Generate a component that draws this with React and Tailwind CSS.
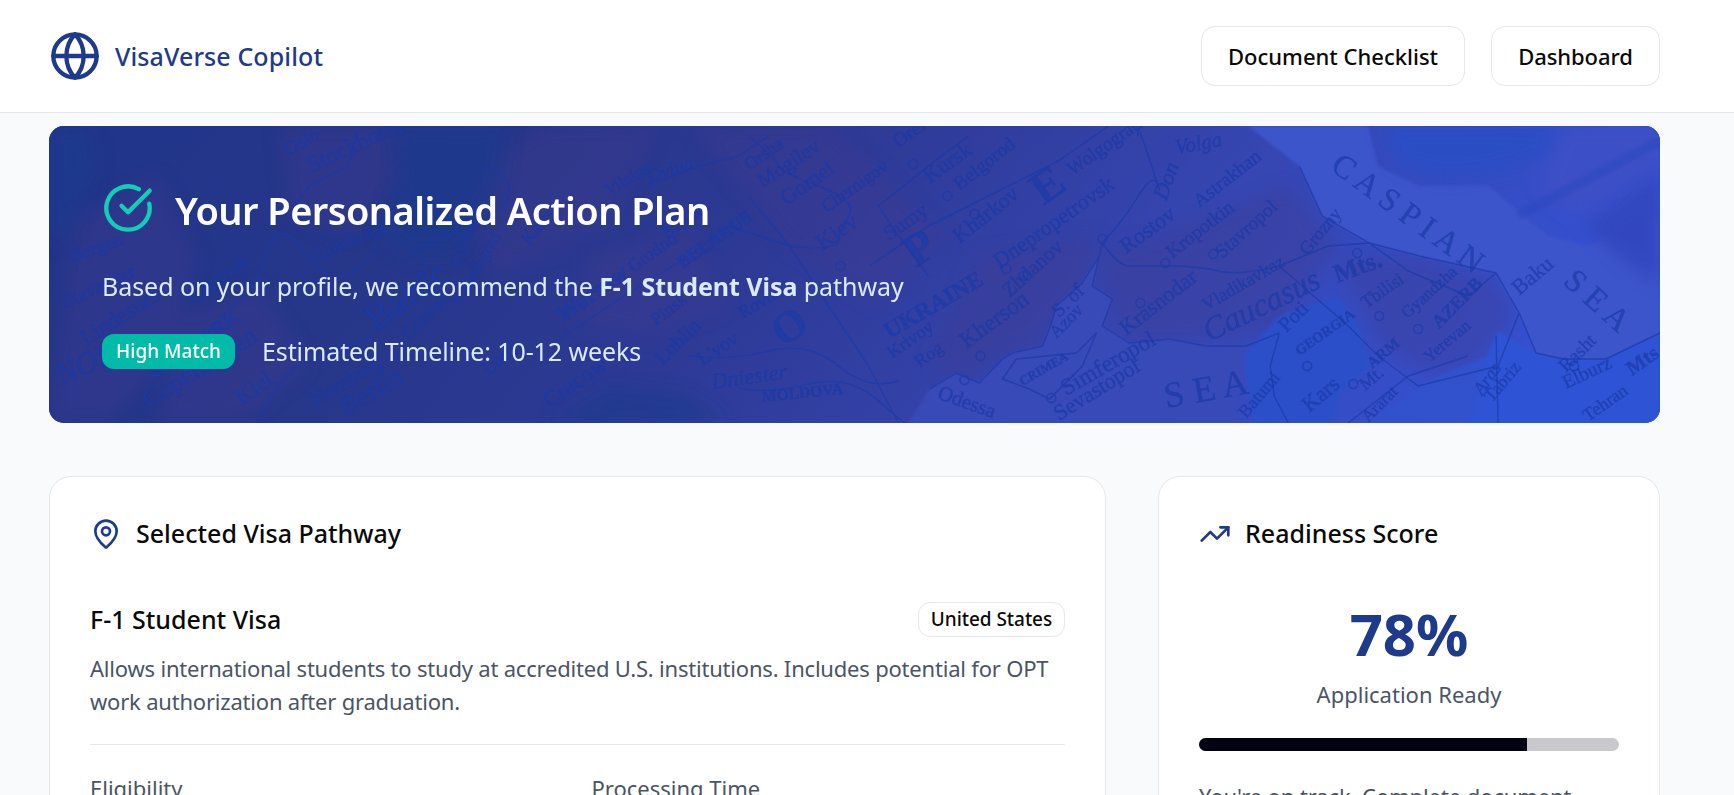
import React from 'react';
import { Globe, CircleCheckBig, MapPin, TrendingUp } from 'lucide-react';

// place names printed on the old map behind the hero: [text, x, y, rotation, size, style]
const mapLabels = [
  ['Bergen', 23, 137, -20, 15], ['Stavanger', 17, 183, -25, 15], ['Lindesnes', 37, 220, -32, 17],
  ['NOR', 13, 260, -25, 24, 'i'], ['DENMARK', 107, 253, -35, 15, 'b'], ['Copenhagen', 100, 283, -32, 20],
  ['Skagerrak', 140, 180, -35, 14], ['Kiel', 193, 280, -35, 18], ['Hamburg', 267, 280, -30, 16],
  ['Berlin', 297, 290, -30, 21], ['Göteborg', 267, 138, -25, 16], ['Stockholm', 263, 47, -25, 18],
  ['Oslo', 240, 30, -30, 15], ['Baltic', 327, 207, -35, 30], ['Gdynia', 411, 143, -70, 13],
  ['Gdansk', 360, 215, -45, 15], ['Kaliningrad', 412, 180, -60, 13], ['Kaunas', 480, 120, -50, 14],
  ['Vilnius', 560, 70, -30, 13], ['Warsaw', 514, 197, -35, 18, 'b'], ['Cracow', 501, 283, -35, 18],
  ['Lublin', 614, 240, -45, 16], ['Lodz', 440, 250, -40, 15], ['Dvina', 601, 57, -18, 15, 'i'],
  ['Minsk', 618, 113, -35, 16], ['BELARUS', 634, 143, -35, 14, 'b'], ['Grodno', 584, 147, -35, 14],
  ['Pinsk', 608, 200, -38, 14], ['Rovno', 694, 193, -30, 14], ['O', 735, 222, -35, 44, 'b'],
  ["L'vov", 654, 240, -33, 15], ['Dniester', 664, 263, -8, 17, 'i'], ['MOLDOVA', 714, 276, -6, 12, 'b'],
  ['Orsha', 701, 45, -35, 14], ['Mogilev', 714, 62, -33, 16], ['Gomel', 738, 80, -35, 17],
  ['Chernigov', 778, 87, -35, 14], ['Kiev', 774, 125, -35, 18], ['Sumy', 841, 115, -35, 16],
  ['Orel', 850, 22, -35, 15], ['Kursk', 881, 58, -35, 17], ['Belgorod', 911, 65, -38, 15],
  ['Kharkov', 911, 118, -38, 17], ['Dnepropetrovsk', 951, 143, -35, 17], ['Zhdanov', 961, 172, -42, 16],
  ['Kherson', 918, 223, -36, 18], ['UKRAINE', 841, 213, -30, 18, 'b'], ['Krivoy', 844, 233, -35, 14],
  ['Rog', 871, 242, -35, 14], ['Rostov', 1078, 128, -36, 17], ['Don', 1118, 75, -70, 17, 'i'],
  ['Volga', 1128, 28, -10, 16, 'i'], ['Astrakhan', 1151, 82, -38, 15], ['Kropotkin', 1124, 133, -38, 15],
  ['Stavropol', 1174, 133, -42, 15], ['Krasnodar', 1078, 210, -38, 17], ['Vladikavkaz', 1158, 185, -30, 14],
  ['Caucasus', 1161, 216, -26, 25, 'i'], ['Simferopol', 1018, 270, -30, 18], ['Sevastopol', 1011, 295, -32, 17],
  ['S E A', 1118, 282, -10, 28], ['S. of', 1011, 192, -45, 15], ['Azov', 1008, 213, -45, 14],
  ['Odessa', 888, 272, 20, 16], ['CRIMEA', 974, 260, -30, 10, 'b'], ['P', 868, 142, -35, 46, 'b'],
  ['E', 995, 80, -35, 46, 'b'], ['Wolgograd', 1024, 50, -35, 15], ['Batumi', 1198, 293, -50, 14],
  ['C A S P I A N', 1281, 43, 36, 25], ['S E A', 1514, 157, 42, 25], ['Grozny', 1259, 130, -50, 14],
  ['Mts.', 1289, 157, -20, 20, 'b'], ['Tbilisi', 1318, 183, -35, 14], ['Gyandzha', 1359, 193, -42, 13],
  ['AZERB', 1391, 203, -45, 14, 'b'], ['GEORGIA', 1251, 230, -35, 11, 'b'], ['Poti', 1238, 207, -45, 16],
  ['ARM', 1324, 243, -40, 12, 'b'], ['Yerevan', 1381, 237, -40, 13], ['Kars', 1261, 287, -40, 17],
  ['Baku', 1471, 170, -40, 17], ['Rasht', 1518, 247, -45, 15], ['Elburz', 1518, 263, -25, 15],
  ['Tabriz', 1444, 277, -50, 14], ['Mts', 1584, 250, -35, 16, 'b'], ['Aras', 1434, 270, -55, 14, 'i'],
  ['Ararat', 1320, 297, -45, 13], ['Mt.', 1317, 265, -40, 14], ['Tehran', 1540, 296, -35, 14],
];

const mapLines = [
  // coast of the Black Sea and the Azov
  'M881 263 L908 247 L931 257 L954 233 L964 227 L994 220 L1001 203 L1008 180 L1034 157 L1051 130 L1054 117',
  'M1051 130 L1044 160 L1064 173 L1054 200 L1081 217 L1121 213 L1158 220 L1198 220 L1231 207',
  'M954 253 L968 233 L1028 227 L1048 207 L1034 240 L1001 273 L981 263 Z',
  'M1231 207 L1222 240 L1226 270 L1240 297',
  // Caspian shore
  'M1251 40 L1274 90 L1321 117 L1371 130 L1448 147 L1471 187 L1488 227 L1515 233 L1558 233 L1612 207',
  // rivers and borders
  'M1054 117 Q1075 95 1090 70 T1110 60 T1100 30 T1090 10',
  'M1054 117 Q1070 140 1080 140 T1120 140 T1170 145 T1231 140',
  'M821 140 L880 100 L960 60 L1010 35 L1060 0',
  'M880 150 L850 110 L830 80 L880 40 L920 10',
  'M741 120 Q790 125 790 115 T800 90 T770 60 T730 40 T700 10',
  'M700 70 L741 120 L780 180 L820 240 L850 297',
  'M500 220 L560 180 L640 130 L680 100 L741 120',
  'M600 60 L650 40 L690 30 L720 10',
  'M640 230 Q680 235 720 225 T790 240 T850 255',
  'M690 262 Q720 268 760 258 T830 275 T860 297',
  'M330 120 Q310 150 290 150 T250 120 T215 135 T200 170 T165 200 T150 250',
  'M210 297 Q230 250 250 240 T300 220 T360 170 T370 130 T420 100 T440 40',
  'M310 0 L300 40 L260 60 L240 90',
  'M1231 140 L1280 120 L1321 117 L1360 145 L1420 170 L1448 147',
  'M1231 140 L1300 200 L1330 230 L1370 260 L1450 240 L1471 187',
  'M1300 297 L1360 250 L1420 230',
  'M1448 210 L1450 297',
];

const mapCircles = [[1054, 113], [1117, 137], [1165, 128], [926, 88], [899, 70], [865, 38], [932, 230], [916, 254], [1092, 177], [975, 150], [958, 143], [1309, 127], [1331, 190], [1305, 258], [1370, 203], [1259, 240], [1526, 240], [737, 160], [792, 140], [1003, 272]];

function MapBackground() {
  return (
    <svg className="absolute inset-0 h-full w-full" viewBox="0 0 1612 297" preserveAspectRatio="none" aria-hidden="true">
      <defs>
        <linearGradient id="heroBase" x1="0" y1="0" x2="1" y2="0.15">
          <stop offset="0" stopColor="#20358a" />
          <stop offset="0.3" stopColor="#27378a" />
          <stop offset="0.5" stopColor="#2e3a96" />
          <stop offset="0.75" stopColor="#3646b2" />
          <stop offset="1" stopColor="#3550cf" />
        </linearGradient>
        <filter id="soft" x="-10%" y="-10%" width="120%" height="120%">
          <feGaussianBlur stdDeviation="9" />
        </filter>
        <filter id="edge" x="-5%" y="-5%" width="110%" height="110%">
          <feGaussianBlur stdDeviation="1.6" />
        </filter>
        <filter id="ink" x="-5%" y="-5%" width="110%" height="110%">
          <feGaussianBlur stdDeviation="0.5" />
        </filter>
      </defs>
      <rect width="1612" height="297" fill="url(#heroBase)" />

      {/* land tint */}
      <g fill="#3f3b8e" opacity="0.38" filter="url(#soft)">
        <path d="M20 90 L110 50 L150 130 L120 230 L60 297 L0 297 L10 180 Z" />
        <path d="M230 0 L345 0 L350 60 L300 110 L240 90 Z" />
        <path d="M130 190 L210 160 L260 240 L190 297 L110 297 Z" />
        <path d="M440 30 L500 0 L610 0 L560 100 L450 150 L420 110 Z" />
        <path d="M540 130 L640 100 L680 180 L600 210 L530 200 Z" />
        <path d="M640 0 L780 0 L900 110 L830 180 L740 120 Z" />
        <path d="M930 130 L1050 110 L1040 160 L990 215 L920 250 L880 240 Z" />
        <path d="M1054 130 L1140 100 L1240 60 L1290 120 L1230 205 L1160 215 L1080 215 L1060 175 Z" />
        <path d="M1290 130 L1370 130 L1448 150 L1470 190 L1430 240 L1380 250 L1330 220 Z" />
      </g>

      {/* dark water at the left */}
      <g fill="#1d3a8e" opacity="0.7" filter="url(#soft)">
        <path d="M345 0 L460 0 L450 60 L410 130 L360 130 L330 110 L350 50 Z" />
        <path d="M500 297 L560 260 L640 270 L680 297 Z" />
        <path d="M0 0 L40 0 L50 40 L20 110 L0 120 Z" />
      </g>

      {/* seas and lowlands on the right */}
      <g filter="url(#edge)">
        <path d="M881 263 L908 247 L931 257 L954 233 L964 227 L994 220 L1001 203 L1008 180 L1034 157 L1051 130 L1044 160 L1064 173 L1054 200 L1081 217 L1121 213 L1158 220 L1198 220 L1190 297 L860 297 Z" fill="#394ab8" />
        <path d="M1251 40 L1274 90 L1321 117 L1371 130 L1448 147 L1471 187 L1488 227 L1515 233 L1558 233 L1612 207 L1612 90 L1540 120 L1500 110 L1440 60 L1371 60 L1330 40 L1320 0 L1200 0 Z" fill="#3d54cb" />
        <path d="M1231 190 L1290 170 L1310 200 L1322 240 L1290 270 L1285 297 L1205 297 L1195 230 Z" fill="#2b4fc8" />
        <path d="M1400 297 L1430 250 L1450 205 L1488 227 L1515 233 L1558 233 L1612 207 L1612 297 Z" fill="#2e53d4" />
        <path d="M1320 297 L1380 255 L1440 230 L1420 297 Z" fill="#3251cd" />
      </g>
      <g filter="url(#soft)">
        <path d="M1330 0 L1350 40 L1400 52 L1450 45 L1500 30 L1510 0 Z" fill="#294dc4" />
        <path d="M1535 100 L1612 45 L1612 160 L1570 130 Z" fill="#3346bf" />
        <path d="M1515 0 L1612 0 L1612 40 L1530 90 L1490 60 Z" fill="#3d50c6" />
      </g>
      <path d="M1470 90 L1612 15" stroke="#2a48c0" strokeWidth="9" opacity="0.55" filter="url(#edge)" />

      {/* lines, towns and names */}
      <g fill="none" stroke="#1b3aa8" strokeWidth="1.4" opacity="0.7" filter="url(#ink)">
        {mapLines.map((d, i) => (
          <path key={i} d={d} strokeLinejoin="round" />
        ))}
        {mapCircles.map(([cx, cy], i) => (
          <circle key={i} cx={cx} cy={cy} r="4.5" />
        ))}
      </g>
      <g fill="#1b3aa8" stroke="#1b3aa8" strokeWidth="0.3" opacity="0.72" filter="url(#ink)" fontFamily="'Liberation Serif', serif">
        {mapLabels.map(([text, x, y, rot, size, style], i) => (
          <text
            key={i}
            x={x}
            y={y}
            fontSize={size >= 40 ? size : size * 1.3}
            fontWeight={style === 'b' ? 700 : 400}
            fontStyle={style === 'i' ? 'italic' : 'normal'}
            transform={`rotate(${rot} ${x} ${y})`}
          >
            {text}
          </text>
        ))}
      </g>
    </svg>
  );
}

export default function App() {
  return (
    <div className="h-screen overflow-hidden bg-[#f9fafb] font-['Noto_Sans',sans-serif]">
      {/* Top bar */}
      <header className="flex h-[113px] items-center justify-between border-b border-[#e5e7eb] bg-white pl-[49px] pr-[74px]">
        <div className="flex items-center gap-[14px]">
          <Globe size={52} strokeWidth={2} className="text-[#1e3a8a]" />
          <span className="relative top-[1px] text-[25px] font-medium tracking-[0.1px] text-[#1e3a8a]">VisaVerse Copilot</span>
        </div>
        <div className="flex items-center gap-[26px]">
          <button className="h-[60px] w-[264px] rounded-[14px] border border-[#e5e7eb] bg-white text-[22px] font-medium text-[#0a0a0a]">
            Document Checklist
          </button>
          <button className="h-[60px] w-[169px] rounded-[14px] border border-[#e5e7eb] bg-white text-[22px] font-medium tracking-[-0.1px] text-[#0a0a0a]">
            Dashboard
          </button>
        </div>
      </header>

      <main className="pl-[49px] pr-[74px] pt-[13px]">
        {/* Hero */}
        <section className="relative h-[297px] overflow-hidden rounded-[15px] bg-[#1e3a8a]">
          <MapBackground />
          <div className="relative px-[53px] pt-[56px]">
            <div className="flex items-center gap-[21px]">
              <CircleCheckBig size={52} strokeWidth={2} className="text-[#14cdb8]" />
              <h1 className="relative top-[2px] text-[38px] font-semibold leading-[52px] tracking-[-0.55px] text-white">Your Personalized Action Plan</h1>
            </div>
            <p className="mt-[34px] text-[25px] leading-[36px] tracking-[-0.05px] text-[#dbeafe]">
              Based on your profile, we recommend the <strong className="font-bold">F-1 Student Visa</strong> pathway
            </p>
            <div className="mt-[29px] flex items-center gap-[27px]">
              <span className="flex h-[35px] w-[133px] items-center justify-center rounded-[12px] bg-[#00bba7] text-[19px] font-medium text-white">
                High Match
              </span>
              <span className="text-[25px] leading-[36px] tracking-[-0.1px] text-[#dbeafe]">Estimated Timeline: 10-12 weeks</span>
            </div>
          </div>
        </section>

        <div className="mt-[53px] flex gap-[52px]">
          {/* Selected pathway */}
          <section className="w-[1057px] shrink-0 rounded-[22px] border border-[#e5e7eb] bg-white px-[40px] pt-[41px]">
            <div className="flex h-[32px] items-center gap-[14px]">
              <MapPin size={32} strokeWidth={2} className="text-[#1e3a8a]" />
              <h2 className="text-[25px] font-medium text-[#0a0a0a]">Selected Visa Pathway</h2>
            </div>
            <div className="mt-[52px] flex h-[35px] items-center justify-between">
              <h3 className="text-[25px] font-medium text-[#0a0a0a]">F-1 Student Visa</h3>
              <span className="flex h-[35px] w-[147px] items-center justify-center rounded-[12px] border border-[#e5e7eb] text-[19px] font-medium tracking-[-0.05px] text-[#0a0a0a]">
                United States
              </span>
            </div>
            <p className="mt-[15px] text-[22px] leading-[33px] tracking-[-0.2px] text-[#4a5565]">
              Allows international students to study at accredited U.S. institutions. Includes potential for OPT work authorization after graduation.
            </p>
            <div className="mt-[26px] border-t border-[#e5e7eb]" />
            <div className="mt-[27px] grid grid-cols-2 gap-[28px]">
              <div className="text-[22px] leading-[33px] text-[#4a5565]">Eligibility</div>
              <div className="text-[22px] leading-[33px] text-[#4a5565]">Processing Time</div>
            </div>
          </section>

          {/* Readiness score */}
          <section className="w-[502px] shrink-0 rounded-[22px] border border-[#e5e7eb] bg-white px-[40px] pt-[41px]">
            <div className="flex h-[32px] items-center gap-[14px]">
              <TrendingUp size={32} strokeWidth={2} className="text-[#1e3a8a]" />
              <h2 className="text-[25px] font-medium text-[#0a0a0a]">Readiness Score</h2>
            </div>
            <div className="mt-[46px] text-center text-[58px] font-bold leading-[76px] text-[#1e3a8a]">78%</div>
            <div className="mt-[6px] text-center text-[22px] leading-[33px] text-[#4a5565]">Application Ready</div>
            <div className="mt-[27px] h-[13px] w-full overflow-hidden rounded-full bg-[#c9c9cd]">
              <div className="h-full w-[78%] bg-[#030213]" />
            </div>
            <p className="mt-[29px] text-[22px] leading-[33px] tracking-[-0.1px] text-[#4a5565]">
              You're on track. Complete document uploads to reach full readiness.
            </p>
          </section>
        </div>
      </main>
    </div>
  );
}
